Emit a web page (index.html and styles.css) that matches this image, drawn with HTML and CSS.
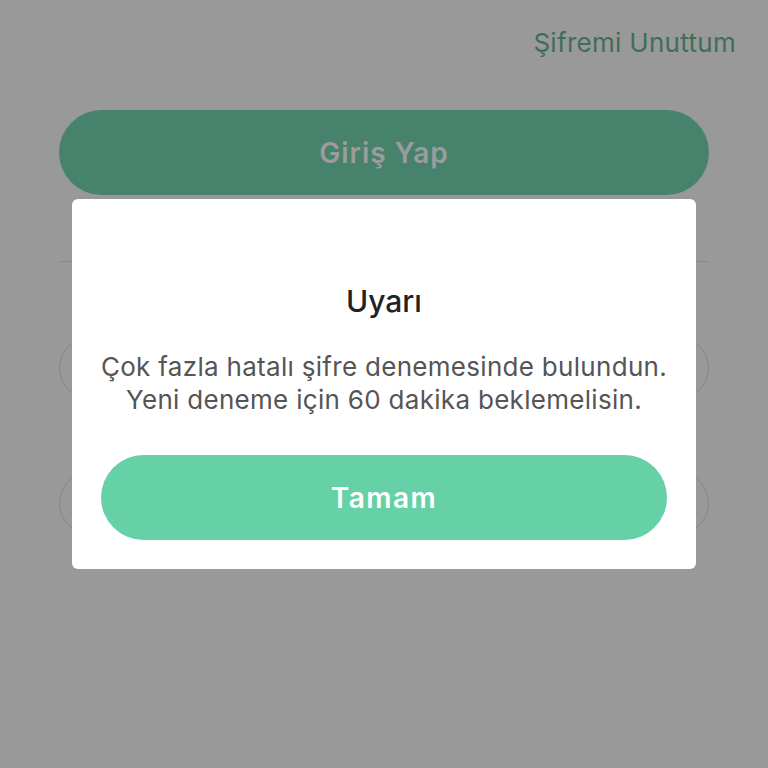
FILE: index.html
```html
<!DOCTYPE html>
<html lang="tr">
<head>
<meta charset="utf-8">
<title>Giriş</title>
<link rel="stylesheet" href="styles.css">
</head>
<body>
<div class="screen">
  <div class="forgot-row"><span class="forgot">Şifremi Unuttum</span></div>
  <div class="login-btn">Giriş Yap</div>
  <div class="divider"></div>
  <div class="social-list">
    <div class="social-btn"></div>
    <div class="social-btn"></div>
  </div>
</div>
<div class="modal">
  <div class="modal-title">Uyarı</div>
  <div class="modal-msg">Çok fazla hatalı şifre denemesinde bulundun.<br>Yeni deneme için 60 dakika beklemelisin.</div>
  <div class="modal-btn">Tamam</div>
</div>
</body>
</html>
```
FILE: styles.css
```css
html, body {
  margin: 0;
  padding: 0;
}
body {
  width: 768px;
  height: 768px;
  overflow: hidden;
  background: #999999;
  font-family: Inter, Roboto, "Liberation Sans", sans-serif;
  position: relative;
}
.screen {
  display: flex;
  flex-direction: column;
  padding: 0 59px;
}
.forgot-row {
  display: flex;
  justify-content: flex-end;
  margin-right: -27px;
  padding-top: 27px;
  height: 110px;
  box-sizing: border-box;
}
.forgot {
  font-size: 26px;
  letter-spacing: 0.3px;
  color: #3e6e5b;
  line-height: 32px;
}
.login-btn {
  height: 85px;
  border-radius: 43px;
  background: #47826c;
  color: #9c9c9c;
  font-size: 28px;
  letter-spacing: 1px;
  font-weight: 600;
  display: flex;
  align-items: center;
  justify-content: center;
}
.divider {
  margin-top: 66px;
  height: 1px;
  background: #8a8a8a;
}
.social-list {
  margin-top: 75px;
  display: flex;
  flex-direction: column;
  gap: 73px;
}
.social-btn {
  height: 60px;
  border: 1.5px solid #868686;
  border-radius: 32px;
}
.modal {
  position: absolute;
  left: 72px;
  top: 199px;
  width: 624px;
  height: 370px;
  box-sizing: border-box;
  background: #ffffff;
  border-radius: 6px;
  padding: 84px 10px 29px;
  display: flex;
  flex-direction: column;
  align-items: stretch;
  text-align: center;
}
.modal-title {
  font-size: 30px;
  font-weight: 500;
  color: #222222;
  line-height: 36px;
}
.modal-msg {
  margin-top: 31px;
  font-size: 26px;
  letter-spacing: 0.3px;
  color: #555555;
  line-height: 33px;
}
.modal-btn {
  margin: auto 19px 0;
  height: 85px;
  border-radius: 43px;
  background: #66d1a6;
  color: #ffffff;
  font-size: 28px;
  letter-spacing: 1.5px;
  font-weight: 600;
  display: flex;
  align-items: center;
  justify-content: center;
}
```
